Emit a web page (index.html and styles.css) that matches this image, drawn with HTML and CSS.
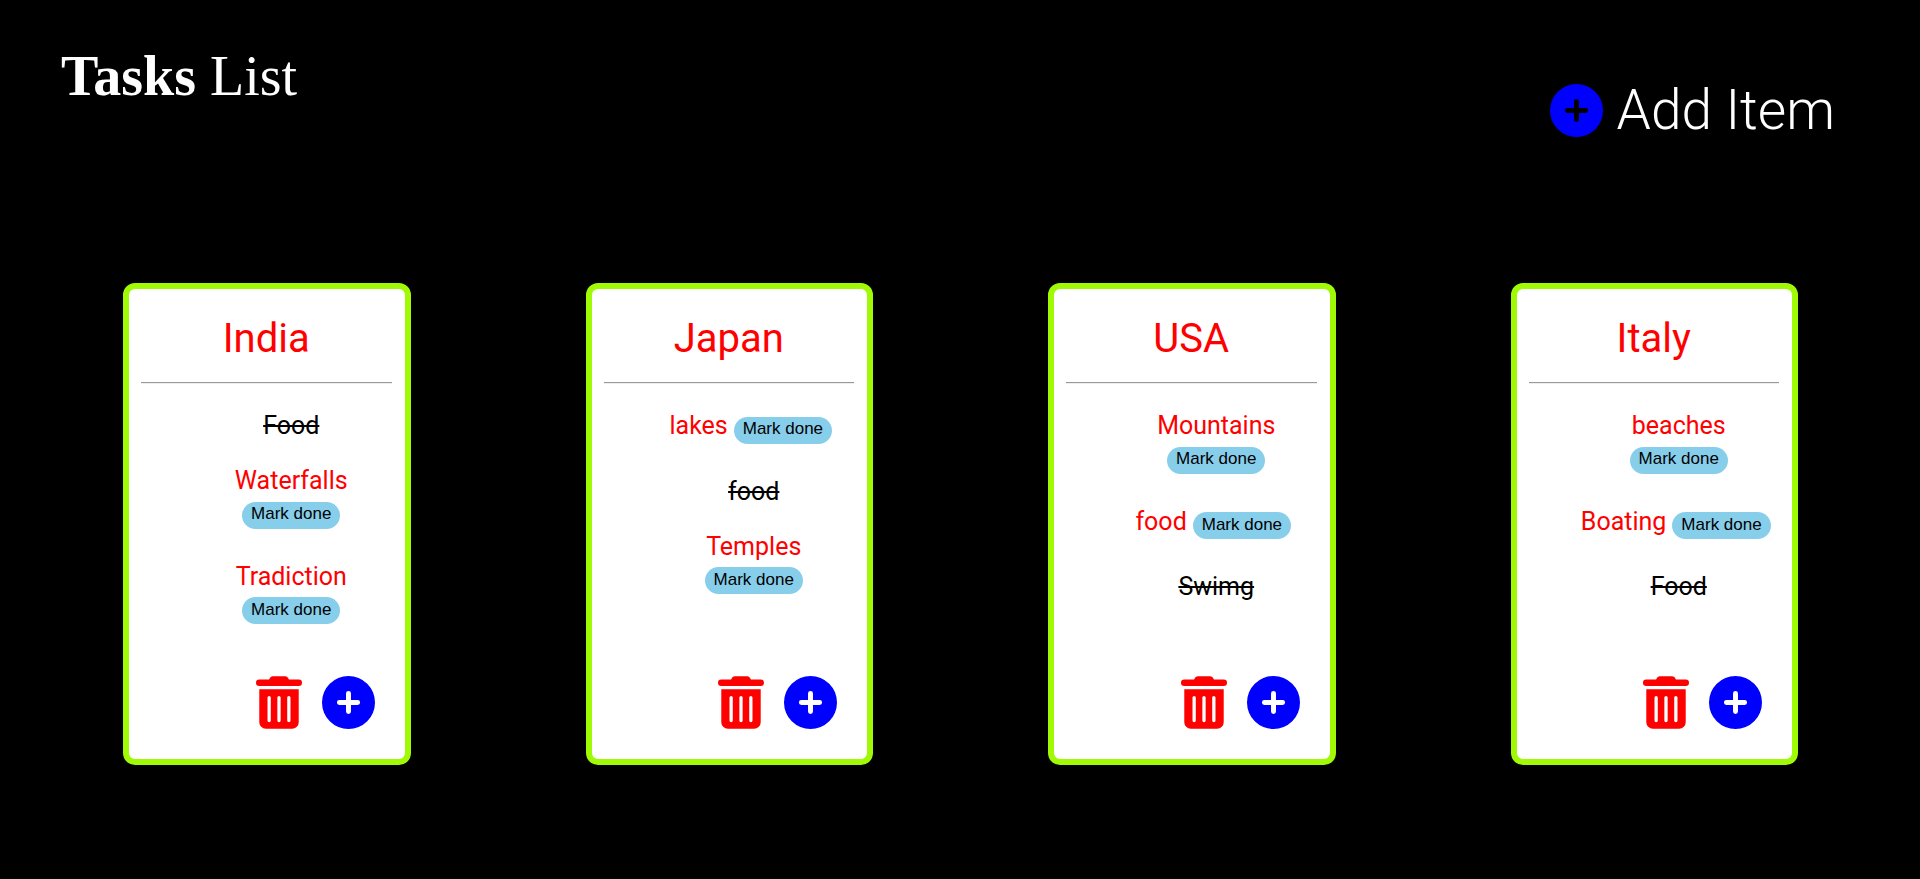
FILE: index.html
```html
<!DOCTYPE html>
<html lang="en">
<head>
<meta charset="utf-8">
<meta name="viewport" content="width=device-width, initial-scale=1">
<title>Tasks List</title>
<link rel="stylesheet" href="styles.css">
</head>
<body>
<svg class="sprite" aria-hidden="true">
  <symbol id="plus" viewBox="0 0 512 512"><path d="M256 0a256 256 0 1 0 0 512 256 256 0 1 0 0-512zM344 280h-64v64a24 24 0 0 1-48 0v-64h-64a24 24 0 0 1 0-48h64v-64a24 24 0 0 1 48 0v64h64a24 24 0 0 1 0 48z"/></symbol>
  <symbol id="trash" viewBox="0 0 448 512"><path fill-rule="evenodd" d="M135 18A32 32 0 0 1 164 0h120a32 32 0 0 1 29 18l7 14h96a32 32 0 0 1 0 64H32a32 32 0 0 1 0-64h96zM32 128h384v320a64 64 0 0 1-64 64H96a64 64 0 0 1-64-64zM112 208v224a16 16 0 0 0 32 0V208a16 16 0 0 0-32 0zM208 208v224a16 16 0 0 0 32 0V208a16 16 0 0 0-32 0zM304 208v224a16 16 0 0 0 32 0V208a16 16 0 0 0-32 0z"/></symbol>
</svg>
<header class="header">
  <h1 class="brand"><b>Tasks</b> List</h1>
  <button class="add-item" type="button"><svg class="icon icon-plus" aria-hidden="true"><use href="#plus"/></svg>Add Item</button>
</header>
<main class="cards">
  <section class="card">
    <h2 class="title">India</h2>
    <hr class="rule">
    <ul class="tasks">
      <li class="done">Food</li>
      <li>Waterfalls<button class="mark" type="button">Mark done</button></li>
      <li>Tradiction<button class="mark" type="button">Mark done</button></li>
    </ul>
    <div class="actions">
      <button class="action" type="button" aria-label="Delete India"><svg class="icon icon-trash"><use href="#trash"/></svg></button>
      <button class="action" type="button" aria-label="Add to India"><svg class="icon icon-plus"><use href="#plus"/></svg></button>
    </div>
  </section>
  <section class="card">
    <h2 class="title">Japan</h2>
    <hr class="rule">
    <ul class="tasks">
      <li>lakes<button class="mark" type="button">Mark done</button></li>
      <li class="done">food</li>
      <li>Temples<button class="mark" type="button">Mark done</button></li>
    </ul>
    <div class="actions">
      <button class="action" type="button" aria-label="Delete Japan"><svg class="icon icon-trash"><use href="#trash"/></svg></button>
      <button class="action" type="button" aria-label="Add to Japan"><svg class="icon icon-plus"><use href="#plus"/></svg></button>
    </div>
  </section>
  <section class="card">
    <h2 class="title">USA</h2>
    <hr class="rule">
    <ul class="tasks">
      <li>Mountains<button class="mark" type="button">Mark done</button></li>
      <li>food<button class="mark" type="button">Mark done</button></li>
      <li class="done">Swimg</li>
    </ul>
    <div class="actions">
      <button class="action" type="button" aria-label="Delete USA"><svg class="icon icon-trash"><use href="#trash"/></svg></button>
      <button class="action" type="button" aria-label="Add to USA"><svg class="icon icon-plus"><use href="#plus"/></svg></button>
    </div>
  </section>
  <section class="card">
    <h2 class="title">Italy</h2>
    <hr class="rule">
    <ul class="tasks">
      <li>beaches<button class="mark" type="button">Mark done</button></li>
      <li>Boating<button class="mark" type="button">Mark done</button></li>
      <li class="done">Food</li>
    </ul>
    <div class="actions">
      <button class="action" type="button" aria-label="Delete Italy"><svg class="icon icon-trash"><use href="#trash"/></svg></button>
      <button class="action" type="button" aria-label="Add to Italy"><svg class="icon icon-plus"><use href="#plus"/></svg></button>
    </div>
  </section>
</main>
</body>
</html>
```

FILE: styles.css
```css
* {
  box-sizing: border-box;
}

body {
  margin: 0;
  background: #000;
  font-family: Roboto, "Liberation Sans", sans-serif;
}

button {
  border: 0;
  padding: 0;
  background: none;
  cursor: pointer;
}

.sprite {
  position: absolute;
  width: 0;
  height: 0;
}

.icon {
  display: block;
  height: 53px;
}

.icon-plus {
  width: 53px;
  fill: #00f;
}

.icon-trash {
  width: 46px;
  fill: #f00;
}

.header {
  display: flex;
  justify-content: space-between;
  align-items: flex-start;
  padding: 44px 85px 0 61px;
}

.brand {
  margin: 0;
  color: #fff;
  font: 400 56px/64px "Liberation Serif", serif;
}

.add-item {
  display: flex;
  align-items: center;
  gap: 14px;
  margin-top: 34px;
  color: #fff;
  font: 300 55px/64px Roboto, sans-serif;
}

.cards {
  display: grid;
  grid-template-columns: repeat(4, 1fr);
  gap: 175px;
  padding: 141px 122px 60px 123px;
}

.card {
  display: flex;
  flex-direction: column;
  min-height: 482px;
  padding: 26px 13px 30px 12px;
  border: 6px solid #a0fa05;
  border-radius: 12px;
  background: #fff;
  text-align: center;
}

.title {
  margin: 0;
  color: #f00;
  font-size: 40px;
  font-weight: 400;
  line-height: 47px;
}

.rule {
  width: 100%;
  margin: 20px 0 0;
  border: 0;
  border-top: 1px solid #999;
  border-bottom: 1px solid #eee;
}

.tasks {
  margin: 27px 0;
  padding: 0 0 0 50px;
  list-style: none;
  color: #f00;
  font-size: 25px;
  line-height: 30px;
}

.tasks li + li {
  margin-top: 25px;
}

.done {
  color: #000;
  text-decoration: line-through;
}

.mark {
  height: 27px;
  margin: 5px 6px 8px;
  padding: 0 9px 2px;
  border-radius: 14px;
  background: skyblue;
  color: #000;
  font: 17px/20px "Liberation Sans", Arial, sans-serif;
}

.actions {
  display: flex;
  justify-content: flex-end;
  gap: 20px;
  margin-top: auto;
  padding-right: 17px;
}
```
